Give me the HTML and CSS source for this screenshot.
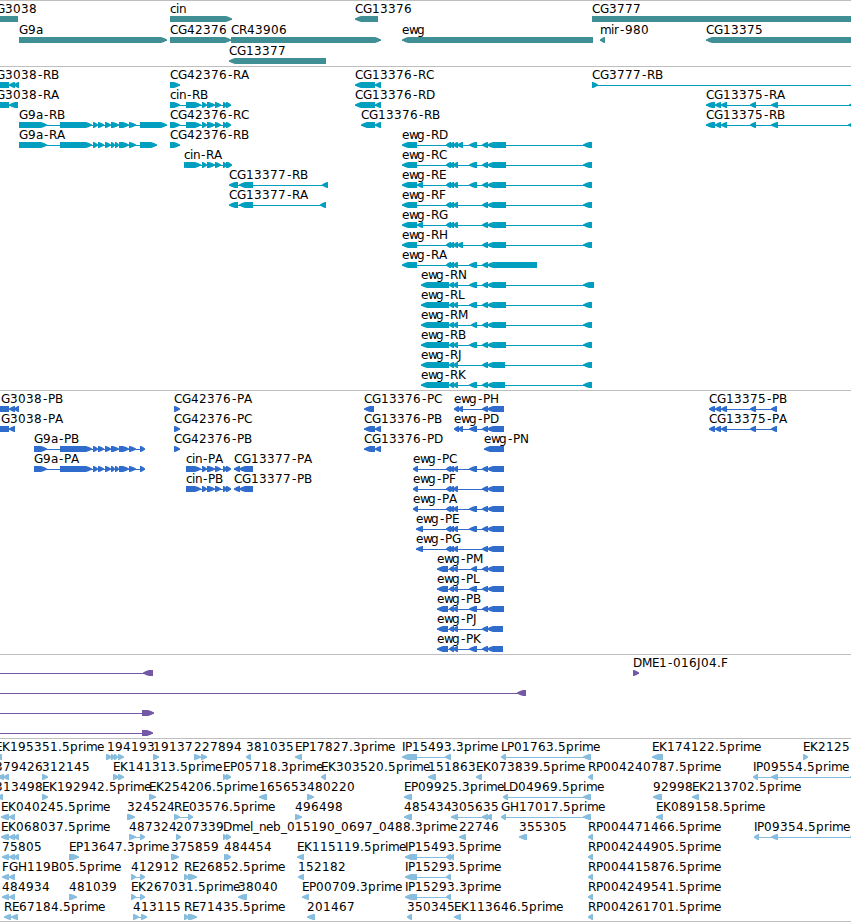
FILE: index.html
```
<!DOCTYPE html>
<html lang="en">
<head>
    <meta charset="UTF-8">
    <meta name="viewport" content="width=device-width, initial-scale=1.0">
    <title>Genome Browser</title>
    <link rel="stylesheet" href="styles.css">
</head>
<body>
    <main class="browser">
        <section class="track track-genes"><svg id="genes" width="851" height="65"></svg></section>
        <section class="track track-transcripts"><svg id="transcripts" width="851" height="323"></svg></section>
        <section class="track track-proteins"><svg id="proteins" width="851" height="263"></svg></section>
        <section class="track track-bacs"><svg id="bacs" width="851" height="83"></svg></section>
        <section class="track track-insertions"><svg id="insertions" width="851" height="182"></svg></section>
    </main>
    <script src="tracks.js"></script>
</body>
</html>
```
FILE: styles.css
```
body {
    margin: 0;
    background-color: #ffffff;
    font-family: "DejaVu Sans", sans-serif;
    font-size: 12px;
    overflow: hidden;
}
.browser {
    width: 851px;
    border-bottom: 1px solid #bebebe;
}
.track {
    border-top: 1px solid #bebebe;
}
.track svg {
    display: block;
}
.label {
    fill: #000000;
}
.intron {
    shape-rendering: crispEdges;
}
.track-genes {
    fill: #408f94;
}
.track-transcripts {
    fill: #009fbf;
}
.track-proteins {
    fill: #306ccc;
}
.track-bacs {
    fill: #7558a5;
}
.track-insertions {
    fill: #87bddf;
}
```
FILE: tracks.js
```
const SVG = "http://www.w3.org/2000/svg";

// whole pixel advance of each character, digits are all 8
const widths = {
    A: 9, B: 8, C: 8, D: 9, E: 7, F: 7, G: 9, H: 9, I: 3, J: 4, K: 8, L: 6, M: 10, N: 9, P: 7, R: 8,
    a: 7, b: 8, c: 6, e: 7, g: 8, i: 3, l: 3, m: 11, n: 7, p: 8, r: 5, w: 8, "-": 6, ".": 4, "_": 6
};

// exons that several transcripts share
const g9a = [[60, 92], [93, 98], [98, 104], [105, 111], [111, 119], [119, 129], [129, 136]];
const g9aSplit = [[60, 92], [93, 98], [98, 104], [105, 111], [111, 115], [115, 119], [119, 129], [129, 136]];
const cin = [[186, 201], [202, 207], [207, 215], [215, 221], [223, 227], [226, 231]];
const three = [[446, 451], [449, 454], [453, 458]];
const four = [...three, [457, 463]];
const two = [[449, 454], [453, 458]];
const mid = [469, 477];
const small = [482, 488];
const end = [583, 592];
const big = [487, 506];
const cg13375 = [[715, 721], [721, 727], [750, 756]];

// [row, label x, label, direction, exons, line start, line end]
const genes = [
    [0, -4, "G3038", "", [[-9, 18]]],
    [0, 170, "cin", ">", [[170, 232]]],
    [0, 355, "CG13376", "<", [[355, 378]]],
    [0, 592, "CG3777", ">", [[592, 870]]],
    [1, 19, "G9a", ">", [[19, 167]]],
    [1, 170, "CG42376", ">", [[170, 231]]],
    [1, 231, "CR43906", ">", [[231, 381]]],
    [1, 402, "ewg", "<", [[402, 593]]],
    [1, 600, "mir-980", "<", [[600, 605]]],
    [1, 706, "CG13375", "<", [[706, 870]]],
    [2, 229, "CG13377", "<", [[229, 326]]]
];

const transcripts = [
    [0, -4, "G3038-RB", "<", [[-9, 9], [9, 15], [14, 19]]],
    [1, -4, "G3038-RA", "<", [[-9, 9], [9, 18]]],
    [2, 19, "G9a-RB", ">", [[19, 47], ...g9a, [140, 167]]],
    [3, 19, "G9a-RA", ">", [[19, 47], ...g9aSplit, [140, 157]]],
    [0, 170, "CG42376-RA", ">", [[170, 180]]],
    [1, 170, "cin-RB", ">", [[170, 180], ...cin]],
    [2, 170, "CG42376-RC", ">", [[170, 180], ...cin]],
    [3, 170, "CG42376-RB", ">", [[170, 180]]],
    [4, 184, "cin-RA", ">", [[184, 189], ...cin, [227, 232]]],
    [5, 229, "CG13377-RB", "<", [[229, 238], [239, 253], [322, 328]]],
    [6, 229, "CG13377-RA", "<", [[229, 238], [239, 253], [320, 326]]],
    [0, 355, "CG13376-RC", "<", [[355, 375], [375, 381]]],
    [1, 355, "CG13376-RD", "<", [[355, 375], [375, 381]]],
    [2, 361, "CG13376-RB", "<", [[361, 375], [375, 381]]],
    [3, 402, "ewg-RD", "<", [[402, 417], ...four, mid, small, big, end]],
    [4, 402, "ewg-RC", "<", [[402, 417], ...three, mid, small, big, end]],
    [5, 402, "ewg-RE", "<", [[402, 417], [417, 423], ...three, mid, small, big, end]],
    [6, 402, "ewg-RF", "<", [[402, 417], ...three, small, big, end]],
    [7, 402, "ewg-RG", "<", [[402, 417], [417, 423], ...three, small, big, end]],
    [8, 402, "ewg-RH", "<", [[402, 417], ...four, small, big, end]],
    [9, 402, "ewg-RA", "<", [[402, 417], ...three, mid, small, [487, 537]]],
    [10, 421, "ewg-RN", "<", [[421, 449], ...two, mid, small, big, [583, 594]]],
    [11, 421, "ewg-RL", "<", [[421, 449], ...two, mid, small, big, end]],
    [12, 421, "ewg-RM", "<", [[421, 449], ...two, [471, 477], small, big, end]],
    [13, 421, "ewg-RB", "<", [[421, 449], ...two, mid, small, big, end]],
    [14, 421, "ewg-RJ", "<", [[421, 449], ...two, small, [487, 505], end]],
    [15, 421, "ewg-RK", "<", [[421, 449], ...two, mid, small, [487, 505], end]],
    [0, 592, "CG3777-RB", ">", [[592, 598]], 592, 851],
    [1, 706, "CG13375-RA", "<", [[706, 715], ...cg13375, [771, 778], [849, 856]]],
    [2, 706, "CG13375-RB", "<", [[706, 715], ...cg13375, [771, 778], [848, 856]]]
];

const proteins = [
    [0, 1, "G3038-PB", "<", [[-9, 9], [9, 15], [14, 19]]],
    [1, 1, "G3038-PA", "<", [[-9, 9], [9, 15]]],
    [2, 34, "G9a-PB", ">", [[34, 47], ...g9a, [140, 145]]],
    [3, 34, "G9a-PA", ">", [[34, 47], ...g9aSplit, [140, 145]]],
    [0, 174, "CG42376-PA", ">", [[174, 180]]],
    [1, 174, "CG42376-PC", ">", [[174, 180]]],
    [2, 174, "CG42376-PB", ">", [[174, 180]]],
    [3, 186, "cin-PA", ">", cin],
    [4, 186, "cin-PB", ">", cin],
    [3, 234, "CG13377-PA", "<", [[234, 240], [239, 253]]],
    [4, 234, "CG13377-PB", "<", [[234, 240], [239, 253]]],
    [0, 364, "CG13376-PC", "<", [[364, 374]]],
    [1, 364, "CG13376-PB", "<", [[364, 375], [375, 381]]],
    [2, 364, "CG13376-PD", "<", [[364, 375], [375, 381]]],
    [0, 454, "ewg-PH", "<", [[454, 459], [458, 463], small, [487, 504]]],
    [1, 454, "ewg-PD", "<", [[454, 459], [458, 463], mid, small, [487, 504]]],
    [2, 484, "ewg-PN", "<", [[484, 504]]],
    [3, 413, "ewg-PC", "<", [[413, 418], ...three, mid, small, [487, 504]]],
    [4, 413, "ewg-PF", "<", [[413, 418], ...three, small, [487, 504]]],
    [5, 413, "ewg-PA", "<", [[413, 418], ...three, mid, small, [487, 504]]],
    [6, 416, "ewg-PE", "<", [[416, 423], ...three, mid, small, [487, 504]]],
    [7, 416, "ewg-PG", "<", [[416, 423], ...three, small, [487, 504]]],
    [8, 437, "ewg-PM", "<", [[437, 448], ...two, [471, 477], small, [487, 504]]],
    [9, 437, "ewg-PL", "<", [[437, 448], ...two, mid, small, [487, 504]]],
    [10, 437, "ewg-PB", "<", [[437, 448], ...two, mid, small, [487, 504]]],
    [11, 437, "ewg-PJ", "<", [[437, 448], ...two, small, [487, 503]]],
    [12, 437, "ewg-PK", "<", [[437, 448], ...two, mid, small, [487, 503]]],
    [0, 709, "CG13375-PB", "<", [[709, 715], ...cg13375, [771, 777]]],
    [1, 709, "CG13375-PA", "<", [[709, 715], ...cg13375, [771, 777]]]
];

const bacs = [
    [0, 0, "", "<", [[143, 153]], 0, 153],
    [0, 633, "DME1-016J04.F", ">", [[633, 639]]],
    [1, 0, "", "<", [[517, 526]], 0, 526],
    [2, 0, "", ">", [[142, 154]], 0, 154],
    [3, 0, "", ">", [[142, 153]], 0, 153]
];

const insertions = [
    [0, -5, "EK195351.5prime", "<", [[-5, 2]]],
    [0, 107, "194193", ">", [[106, 112], [111, 115], [114, 118], [118, 124]]],
    [0, 153, "19137", ">", [[153, 159]]],
    [0, 194, "227894", ">", [[194, 201], [201, 207]]],
    [0, 246, "381035", "<", [[246, 251]]],
    [0, 295, "EP17827.3prime", "<", [[295, 302]]],
    [0, 402, "IP15493.3prime", "<", [[402, 417], [445, 451]]],
    [0, 501, "LP01763.5prime", "<", [[501, 506], [583, 591]]],
    [0, 652, "EK174122.5prime", "<", [[652, 663]]],
    [0, 803, "EK2125", ">", [[803, 808]]],

    [1, -5, "379426", "<", [[-2, 4], [3, 9]]],
    [1, 42, "312145", ">", [[42, 48]]],
    [1, 113, "EK141313.5prime", ">", [[113, 119], [118, 124]]],
    [1, 223, "EP05718.3prime", ">", [[223, 227], [226, 231]]],
    [1, 321, "EK303520.5prime", "<", [[321, 326]]],
    [1, 428, "151863", "<", [[428, 436]]],
    [1, 476, "EK073839.5prime", "<", [[476, 482]]],
    [1, 588, "RP004240787.5prime", "<", [[588, 593]]],
    [1, 753, "IP09554.5prime", "<", [[753, 758], [771, 778], [850, 857]]],

    [2, -5, "313498", "<", [[-4, 3]]],
    [2, 42, "EK192942.5prime", ">", [[42, 48]]],
    [2, 149, "EK254206.5prime", ">", [[149, 156]]],
    [2, 259, "165653", "<", [[259, 267]]],
    [2, 307, "480220", ">", [[307, 314]]],
    [2, 404, "EP09925.3prime", "<", [[404, 412]]],
    [2, 503, "LD04969.5prime", "<", [[503, 508], [583, 591]]],
    [2, 653, "92998", "<", [[653, 662]]],
    [2, 692, "EK213702.5prime", "<", [[692, 699]]],

    [3, 1, "EK040245.5prime", "<", [[1, 9], [9, 15]]],
    [3, 127, "324524", ">", [[127, 135]]],
    [3, 174, "RE03576.5prime", ">", [[174, 180], [188, 193]]],
    [3, 295, "496498", ">", [[295, 302]]],
    [3, 404, "485434", "<", [[404, 412]]],
    [3, 451, "305635", "<", [[451, 458], [482, 488], [486, 492]]],
    [3, 501, "GH17017.5prime", "<", [[501, 506], [583, 591]]],
    [3, 656, "EK089158.5prime", "<", [[656, 663]]],

    [4, 1, "EK068037.5prime", "<", [[1, 9], [9, 15], [14, 19]]],
    [4, 129, "487324", ">", [[129, 136], [140, 145]]],
    [4, 176, "207339", ">", [[176, 181]]],
    [4, 223, "Dmel_neb_015190_0697_0488.3prime", ">", [[223, 227], [226, 231]]],
    [4, 459, "22746", "<", [[459, 466]]],
    [4, 519, "355305", "<", [[519, 527]]],
    [4, 588, "RP004471466.5prime", "<", [[588, 593]]],
    [4, 754, "IP09354.5prime", "<", [[754, 759], [771, 778], [850, 857]]],

    [5, 2, "75805", "<", [[2, 9], [9, 15], [14, 19]]],
    [5, 69, "EP13647.3prime", ">", [[69, 79]]],
    [5, 171, "375859", ">", [[171, 179]]],
    [5, 224, "484454", ">", [[224, 228], [226, 231]]],
    [5, 297, "EK115119.5prime", "<", [[297, 304]]],
    [5, 405, "IP15493.5prime", "<", [[405, 417], [446, 451], [450, 454]]],
    [5, 588, "RP004244905.5prime", "<", [[588, 593]]],

    [6, 2, "FGH119B05.5prime", "<", [[2, 9], [9, 15]]],
    [6, 131, "412912", ">", [[131, 136], [140, 145]]],
    [6, 184, "RE26852.5prime", ">", [[184, 189], [188, 197]]],
    [6, 298, "152182", "<", [[298, 304]]],
    [6, 405, "IP15293.5prime", "<", [[405, 417], [446, 451]]],
    [6, 588, "RP004415876.5prime", "<", [[588, 593]]],

    [7, 2, "484934", "<", [[2, 9], [9, 15]]],
    [7, 69, "481039", ">", [[69, 77]]],
    [7, 131, "EK267031.5prime", ">", [[131, 136], [140, 145]]],
    [7, 238, "38040", "<", [[238, 247]]],
    [7, 302, "EP00709.3prime", "<", [[302, 309]]],
    [7, 405, "IP15293.3prime", "<", [[405, 417], [446, 451]]],
    [7, 588, "RP004249541.5prime", "<", [[588, 593]]],

    [8, 4, "RE67184.5prime", "<", [[4, 11], [11, 18]]],
    [8, 133, "413115", ">", [[133, 139], [141, 147]]],
    [8, 184, "RE71435.5prime", ">", [[184, 189], [188, 197]]],
    [8, 307, "201467", "<", [[307, 315]]],
    [8, 407, "350345", "<", [[407, 412]]],
    [8, 454, "EK113646.5prime", "<", [[454, 461]]],
    [8, 588, "RP004261701.5prime", "<", [[588, 593]]]
];

function add(svg, tag, attrs) {
    const el = document.createElementNS(SVG, tag);
    for (const key in attrs) {
        el.setAttribute(key, attrs[key]);
    }
    svg.appendChild(el);
    return el;
}

// bar with a slightly rounded arrow head on the side it points to
function exonPoints(a, b, y, dir) {
    if (dir === "") {
        return `${a},${y} ${b},${y} ${b},${y + 6} ${a},${y + 6}`;
    }
    const head = Math.min(6, b - a - 1);
    const tip = dir === ">" ? b : a;
    const back = dir === ">" ? a : b;
    const s = dir === ">" ? -1 : 1;
    return [
        [back, y], [tip + s * head, y], [tip + s * head / 2, y + 1], [tip, y + 2.6],
        [tip, y + 3.6], [tip + s * head / 2, y + 5], [tip + s * head, y + 6], [back, y + 6]
    ].join(" ");
}

function drawTrack(id, features, rowHeight) {
    const svg = document.getElementById(id);
    features.forEach(([row, x, label, dir, exons, start, stop]) => {
        const y = row * rowHeight + 15;
        const from = start ?? exons[0][0];
        const to = stop ?? exons[exons.length - 1][1];
        add(svg, "rect", { class: "intron", x: from, y: y + 3, width: to - from, height: 1 });
        exons.forEach(([a, b]) => {
            add(svg, "polygon", { class: "exon", points: exonPoints(a, b, y, dir) });
        });
        if (label) {
            let pos = x;
            const xs = [...label].map(c => {
                // the hyphen glyph is narrower than its cell
                const cur = c === "-" ? pos + 1 : pos;
                pos += widths[c] || 8;
                return cur;
            });
            add(svg, "text", { class: "label", x: xs.join(" "), y: y - 3 }).textContent = label;
        }
    });
}

drawTrack("genes", genes, 21);
drawTrack("transcripts", transcripts, 20);
drawTrack("proteins", proteins, 20);
drawTrack("bacs", bacs, 20);
drawTrack("insertions", insertions, 20);
```
